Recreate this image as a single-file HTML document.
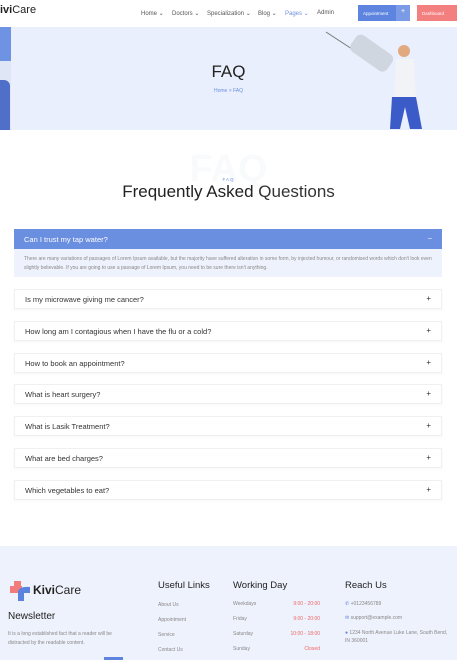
<!DOCTYPE html>
<html><head><meta charset="utf-8"><style>
*{margin:0;padding:0;box-sizing:border-box}
body{width:457px;height:660px;overflow:hidden;background:#fff;font-family:"Liberation Sans",sans-serif;color:#222;position:relative}
.a{position:absolute}
.nav{font-size:6px;color:#555}
.item{position:absolute;left:14px;width:428px;height:20px;background:#fff;border:1px solid #eef0f4;box-shadow:0 1px 3px rgba(0,0,0,.04);font-size:7.5px;color:#333;padding:5px 0 0 10px}
.item span{position:absolute;right:10px;top:4px;font-size:8px;color:#333}
.fl{font-size:5px;color:#888}
</style></head><body>
<div class="a" style="left:0;top:4px;font-size:11px;color:#222"><b>ivi</b>Care</div>
<div class="a nav" style="left:141px;top:10px">Home ⌄</div>
<div class="a nav" style="left:172px;top:10px">Doctors ⌄</div>
<div class="a nav" style="left:207px;top:10px">Specialization ⌄</div>
<div class="a nav" style="left:258px;top:10px">Blog ⌄</div>
<div class="a nav" style="left:285px;top:10px;color:#6b8ee0">Pages ⌄</div>
<div class="a nav" style="left:317px;top:10px">Admin</div>
<div class="a" style="left:358px;top:5px;width:38px;height:16px;background:#5d84de;color:#fff;font-size:4.5px;padding:6px 0 0 5px">Appointment</div>
<div class="a" style="left:396px;top:5px;width:14px;height:16px;background:#7b9be6;color:#fff;font-size:7px;text-align:center;padding-top:3px">+</div>
<div class="a" style="left:417px;top:5px;width:40px;height:16px;background:#f37f7f;color:#fff;font-size:4.5px;padding:6px 0 0 5px">Dashboard</div>
<div class="a" style="left:0;top:27px;width:457px;height:103px;background:#e9effc"></div>
<div class="a" style="left:0;top:27px;width:11px;height:103px;background:#dfe6f5"></div>
<div class="a" style="left:0;top:27px;width:11px;height:34px;background:#6f93e3"></div>
<div class="a" style="left:0;top:80px;width:10px;height:50px;background:#4f6fc9;border-radius:0 6px 0 0"></div>
<svg class="a" style="left:320px;top:27px" width="120" height="103"><line x1="6" y1="5" x2="32" y2="22" stroke="#777" stroke-width="1"/><rect x="30" y="15" width="44" height="20" rx="6" transform="rotate(35 50 25)" fill="#cfd6e0"/><circle cx="84" cy="24" r="6" fill="#e2a880"/><path d="M76 32 L94 32 L96 70 L74 70 Z" fill="#f1f3f6"/><path d="M72 70 L96 70 L102 102 L90 102 L85 80 L80 102 L70 102 Z" fill="#3b5cc8"/></svg>
<div class="a" style="left:0;top:62px;width:457px;text-align:center;font-size:17px;color:#222">FAQ</div>
<div class="a" style="left:0;top:88px;width:457px;text-align:center;font-size:5px;color:#6b8ee0">Home &gt; FAQ</div>
<div class="a" style="left:0;top:148px;width:457px;text-align:center;font-size:38px;font-weight:bold;color:#f9fafc">FAQ</div>
<div class="a" style="left:0;top:177px;width:457px;text-align:center;font-size:4.5px;color:#6b8ee0;letter-spacing:1px">FAQ</div>
<div class="a" style="left:0;top:182px;width:457px;text-align:center;font-size:17px;color:#222">Frequently Asked <span style="color:#333">Questions</span></div>
<div class="a" style="left:14px;top:229px;width:428px;height:20px;background:#6a8ee0;color:#fff;font-size:7.5px;padding:6px 0 0 10px">Can I trust my tap water?<span style="position:absolute;right:10px;top:4px">–</span></div>
<div class="a" style="left:14px;top:249px;width:428px;height:28px;background:#eef2fc;font-size:5px;color:#888;padding:6px 10px;line-height:8.5px">There are many variations of passages of Lorem Ipsum available, but the majority have suffered alteration in some form, by injected humour, or randomised words which don't look even slightly believable. If you are going to use a passage of Lorem Ipsum, you need to be sure there isn't anything.</div>
<div class="item" style="top:289px">Is my microwave giving me cancer?<span>+</span></div>
<div class="item" style="top:321px">How long am I contagious when I have the flu or a cold?<span>+</span></div>
<div class="item" style="top:353px">How to book an appointment?<span>+</span></div>
<div class="item" style="top:384px">What is heart surgery?<span>+</span></div>
<div class="item" style="top:416px">What is Lasik Treatment?<span>+</span></div>
<div class="item" style="top:448px">What are bed charges?<span>+</span></div>
<div class="item" style="top:480px">Which vegetables to eat?<span>+</span></div>
<div class="a" style="left:0;top:546px;width:457px;height:114px;background:#eef2fc"></div>
<svg class="a" style="left:8px;top:580px" width="24" height="22"><rect x="2" y="6" width="12" height="7" fill="#f27b7b"/><rect x="6" y="1" width="7" height="12" fill="#f27b7b"/><path d="M10 11 Q12 6 22 7 L22 13 L16 13 L16 21 L10 21 Z" fill="#5b82dd"/></svg>
<div class="a" style="left:33px;top:583px;font-size:12px;color:#222"><b>Kivi</b>Care</div>
<div class="a" style="left:8px;top:611px;font-size:10px;color:#222">Newsletter</div>
<div class="a" style="left:8px;top:630px;font-size:5px;color:#888;line-height:8.5px;width:120px">It is a long established fact that a reader will be distracted by the readable content.</div>
<div class="a" style="left:104px;top:657px;width:19px;height:3px;background:#5d84de"></div>
<div class="a" style="left:158px;top:580px;font-size:9.5px;color:#222">Useful Links</div>
<div class="a fl" style="left:158px;top:602px">About Us</div>
<div class="a fl" style="left:158px;top:617px">Appointment</div>
<div class="a fl" style="left:158px;top:632px">Service</div>
<div class="a fl" style="left:158px;top:647px">Contact Us</div>
<div class="a" style="left:233px;top:580px;font-size:9.5px;color:#222">Working Day</div>
<div class="a fl" style="left:233px;top:601px;width:87px">Weekdays<span style="float:right;color:#e66">9:00 - 20:00</span></div>
<div class="a fl" style="left:233px;top:616px;width:87px">Friday<span style="float:right;color:#e66">9:00 - 20:00</span></div>
<div class="a fl" style="left:233px;top:631px;width:87px">Saturday<span style="float:right;color:#e66">10:00 - 18:00</span></div>
<div class="a fl" style="left:233px;top:646px;width:87px">Sunday<span style="float:right;color:#e66">Closed</span></div>
<div class="a" style="left:345px;top:580px;font-size:9.5px;color:#222">Reach Us</div>
<div class="a fl" style="left:345px;top:601px"><span style="color:#5d84de">✆</span> +0123456789</div>
<div class="a fl" style="left:345px;top:615px"><span style="color:#5d84de">✉</span> support@example.com</div>
<div class="a fl" style="left:345px;top:629px;width:105px;line-height:8px"><span style="color:#5d84de">●</span> 1234 North Avenue Luke Lane, South Bend, IN 360001</div>
</body></html>
